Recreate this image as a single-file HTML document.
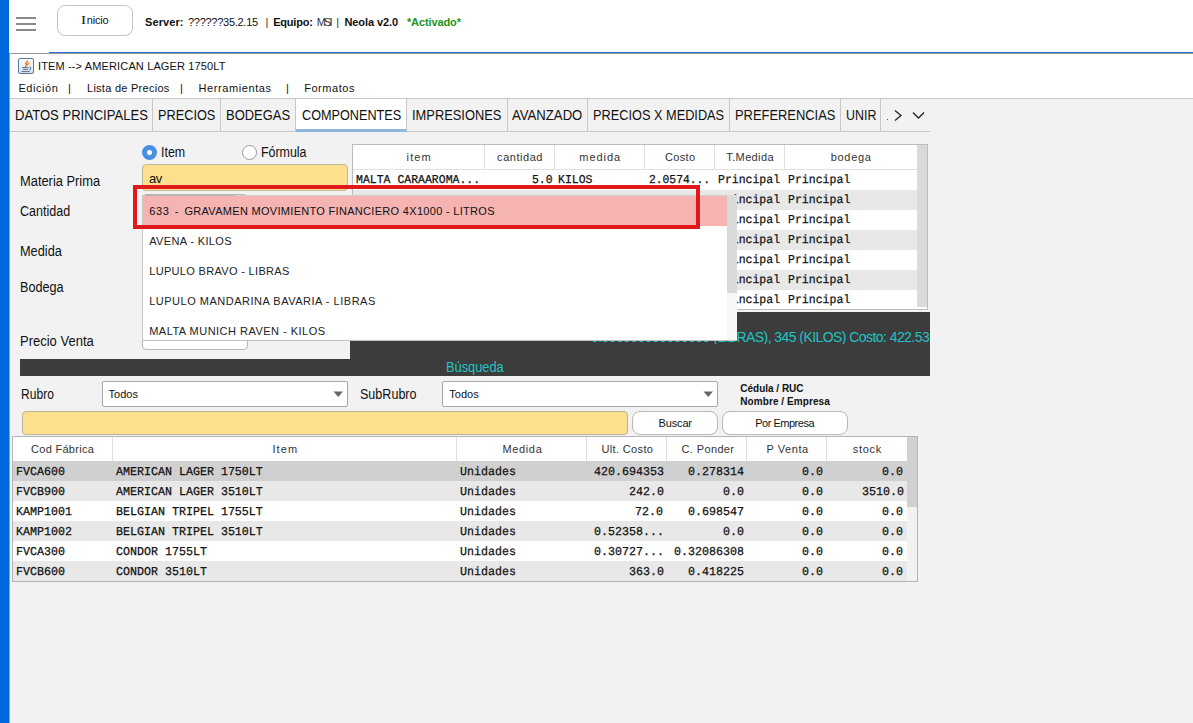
<!DOCTYPE html>
<html><head><meta charset="utf-8">
<style>
*{margin:0;padding:0;box-sizing:border-box}
html,body{width:1193px;height:723px;overflow:hidden;background:#f2f2f2;font-family:"Liberation Sans",sans-serif;position:relative}
.a{position:absolute;white-space:nowrap}
</style></head><body>
<div class="a" style="left:0px;top:0px;width:9px;height:723px;background:#0067da"></div>
<div class="a" style="left:9px;top:0px;width:1184px;height:53px;background:#fff"></div>
<div class="a" style="left:49px;top:52px;width:1144px;height:1px;background:#2a6fd0"></div>
<div class="a" style="left:9px;top:53px;width:1184px;height:1px;background:#9a9a9a"></div>
<div class="a" style="left:9px;top:53px;width:1px;height:670px;background:#9c9c9c"></div>
<div class="a" style="left:16px;top:17px;width:20px;height:2px;background:#8a8a8a"></div>
<div class="a" style="left:16px;top:23px;width:20px;height:2px;background:#8a8a8a"></div>
<div class="a" style="left:16px;top:29px;width:20px;height:2px;background:#8a8a8a"></div>
<div class="a" style="left:57px;top:5px;width:76px;height:31px;border:1px solid #c4c4c4;border-radius:8px;background:#fff"></div>
<div class="a" style="left:80.90px;top:14.00px;font:400 12px/12px 'Liberation Serif';color:#111;transform:scaleX(1.25);transform-origin:0 0">I</div>
<div class="a" style="left:86.70px;top:15.00px;font:400 11px/11px 'Liberation Sans';color:#111;letter-spacing:-0.175px;">nicio</div>
<div class="a" style="left:145.10px;top:17.00px;font:700 11px/11px 'Liberation Sans';color:#111;letter-spacing:0.083px;">Server:</div>
<div class="a" style="left:188.00px;top:17.00px;font:400 11px/11px 'Liberation Sans';color:#111;letter-spacing:-0.275px;">??????35.2.15</div>
<div class="a" style="left:265.40px;top:17.00px;font:400 11px/11px 'Liberation Sans';color:#333;">|</div>
<div class="a" style="left:273.20px;top:17.00px;font:700 11px/11px 'Liberation Sans';color:#111;letter-spacing:-0.200px;">Equipo:</div>
<div class="a" style="left:316.80px;top:17.00px;font:400 11px/11px 'Liberation Sans';color:#333;letter-spacing:-1.900px;">MSI</div>
<div class="a" style="left:336.30px;top:17.00px;font:400 11px/11px 'Liberation Sans';color:#333;">|</div>
<div class="a" style="left:344.50px;top:17.00px;font:700 11px/11px 'Liberation Sans';color:#111;letter-spacing:-0.100px;">Neola v2.0</div>
<div class="a" style="left:406.90px;top:17.00px;font:700 11px/11px 'Liberation Sans';color:#1a961a;letter-spacing:-0.100px;">*Activado*</div>
<div class="a" style="left:10px;top:54px;width:1183px;height:44px;background:#fff"></div>
<svg class="a" style="left:18px;top:58px" width="16" height="16"><defs><linearGradient id="jg" x1="0" y1="0" x2="0" y2="1"><stop offset="0" stop-color="#fafbfc"/><stop offset="1" stop-color="#dfe5ec"/></linearGradient></defs><rect x="0.5" y="0.5" width="15" height="15" rx="1.5" fill="url(#jg)" stroke="#56789a"/><path d="M9.8 2.6 L7.6 5.6 L8.6 6.4 L7.2 9.2 M11 4.6 L9.2 7.2" stroke="#ef7d1e" stroke-width="1.3" fill="none"/><path d="M4 9.6 H10.6 M5 11.4 H10 M3.4 13.6 H11.8" stroke="#4f7394" stroke-width="1" fill="none"/><path d="M11.6 8.6 Q13.8 10.2 11.4 12.2" stroke="#4f7394" stroke-width="1.1" fill="none"/></svg>
<div class="a" style="left:38.00px;top:61.00px;font:400 11px/11px 'Liberation Sans';color:#111;letter-spacing:0.138px;">ITEM --&gt; AMERICAN LAGER 1750LT</div>
<div class="a" style="left:18.40px;top:83.00px;font:400 11px/11px 'Liberation Sans';color:#111;letter-spacing:0.550px;">Edición</div>
<div class="a" style="left:68.00px;top:83.00px;font:400 11px/11px 'Liberation Sans';color:#111;">|</div>
<div class="a" style="left:87.00px;top:83.00px;font:400 11px/11px 'Liberation Sans';color:#111;letter-spacing:0.267px;">Lista de Precios</div>
<div class="a" style="left:180.00px;top:83.00px;font:400 11px/11px 'Liberation Sans';color:#111;">|</div>
<div class="a" style="left:198.60px;top:83.00px;font:400 11px/11px 'Liberation Sans';color:#111;letter-spacing:0.582px;">Herramientas</div>
<div class="a" style="left:286.00px;top:83.00px;font:400 11px/11px 'Liberation Sans';color:#111;">|</div>
<div class="a" style="left:304.20px;top:83.00px;font:400 11px/11px 'Liberation Sans';color:#111;letter-spacing:0.543px;">Formatos</div>
<div class="a" style="left:10px;top:98px;width:1183px;height:1px;background:#c8c8c8"></div>
<div class="a" style="left:10px;top:131px;width:920px;height:1px;background:#c8c8c8"></div>
<div class="a" style="left:296px;top:99px;width:110px;height:32px;background:#fff"></div>
<div class="a" style="left:296px;top:129px;width:111px;height:3px;background:#8fb6de"></div>
<div class="a" style="left:152px;top:99px;width:1px;height:32px;background:#c8c8c8"></div>
<div class="a" style="left:220px;top:99px;width:1px;height:32px;background:#c8c8c8"></div>
<div class="a" style="left:295px;top:99px;width:1px;height:32px;background:#c8c8c8"></div>
<div class="a" style="left:406px;top:99px;width:1px;height:32px;background:#c8c8c8"></div>
<div class="a" style="left:507px;top:99px;width:1px;height:32px;background:#c8c8c8"></div>
<div class="a" style="left:587px;top:99px;width:1px;height:32px;background:#c8c8c8"></div>
<div class="a" style="left:729px;top:99px;width:1px;height:32px;background:#c8c8c8"></div>
<div class="a" style="left:840px;top:99px;width:1px;height:32px;background:#c8c8c8"></div>
<div class="a" style="left:880px;top:99px;width:1px;height:32px;background:#c8c8c8"></div>
<div class="a" style="left:15.00px;top:108.00px;font:400 14px/14px 'Liberation Sans';color:#111;transform:scaleX(0.9331);transform-origin:0 0;">DATOS PRINCIPALES</div>
<div class="a" style="left:158.30px;top:108.00px;font:400 14px/14px 'Liberation Sans';color:#111;transform:scaleX(0.9095);transform-origin:0 0;">PRECIOS</div>
<div class="a" style="left:226.40px;top:108.00px;font:400 14px/14px 'Liberation Sans';color:#111;transform:scaleX(0.9246);transform-origin:0 0;">BODEGAS</div>
<div class="a" style="left:301.50px;top:108.00px;font:400 14px/14px 'Liberation Sans';color:#111;transform:scaleX(0.9045);transform-origin:0 0;">COMPONENTES</div>
<div class="a" style="left:412.20px;top:108.00px;font:400 14px/14px 'Liberation Sans';color:#111;transform:scaleX(0.9196);transform-origin:0 0;">IMPRESIONES</div>
<div class="a" style="left:512.20px;top:108.00px;font:400 14px/14px 'Liberation Sans';color:#111;transform:scaleX(0.9387);transform-origin:0 0;">AVANZADO</div>
<div class="a" style="left:593.00px;top:108.00px;font:400 14px/14px 'Liberation Sans';color:#111;transform:scaleX(0.9111);transform-origin:0 0;">PRECIOS X MEDIDAS</div>
<div class="a" style="left:734.80px;top:108.00px;font:400 14px/14px 'Liberation Sans';color:#111;transform:scaleX(0.9220);transform-origin:0 0;">PREFERENCIAS</div>
<div class="a" style="left:845.50px;top:108.00px;font:400 14px/14px 'Liberation Sans';color:#111;transform:scaleX(0.8882);transform-origin:0 0;">UNIR</div>
<div class="a" style="left:887px;top:119px;width:1px;height:1px;background:#555"></div>
<svg class="a" style="left:893px;top:109px" width="34" height="14"><path d="M2 1.5 L8 6.5 L2 11.5" stroke="#222" stroke-width="1.3" fill="none"/><path d="M20 3.5 L25.5 9 L31 3.5" stroke="#222" stroke-width="1.3" fill="none"/></svg>
<div class="a" style="left:20.30px;top:174.00px;font:400 14px/14px 'Liberation Sans';color:#111;transform:scaleX(0.9195);transform-origin:0 0;">Materia Prima</div>
<div class="a" style="left:20.30px;top:204.00px;font:400 14px/14px 'Liberation Sans';color:#111;transform:scaleX(0.8964);transform-origin:0 0;">Cantidad</div>
<div class="a" style="left:20.30px;top:244.00px;font:400 14px/14px 'Liberation Sans';color:#111;transform:scaleX(0.9109);transform-origin:0 0;">Medida</div>
<div class="a" style="left:20.30px;top:280.00px;font:400 14px/14px 'Liberation Sans';color:#111;transform:scaleX(0.9042);transform-origin:0 0;">Bodega</div>
<div class="a" style="left:20.30px;top:334.00px;font:400 14px/14px 'Liberation Sans';color:#111;transform:scaleX(0.9287);transform-origin:0 0;">Precio Venta</div>
<div class="a" style="left:142px;top:145px;width:15px;height:15px;border-radius:50%;background:#4a90e2"></div>
<div class="a" style="left:147px;top:150px;width:5px;height:5px;border-radius:50%;background:#fff"></div>
<div class="a" style="left:161.40px;top:145.00px;font:400 14px/14px 'Liberation Sans';color:#111;transform:scaleX(0.8889);transform-origin:0 0;">Item</div>
<div class="a" style="left:242px;top:145px;width:15px;height:15px;border-radius:50%;background:#fff;border:1px solid #9a9a9a"></div>
<div class="a" style="left:261.40px;top:145.00px;font:400 14px/14px 'Liberation Sans';color:#111;transform:scaleX(0.8865);transform-origin:0 0;">Fórmula</div>
<div class="a" style="left:142px;top:164px;width:206px;height:27px;background:#fde08e;border:1px solid #c2b79a;border-radius:4px"></div>
<div class="a" style="left:149.00px;top:172.00px;font:400 13px/13px 'Liberation Sans';color:#111;letter-spacing:-0.600px;">av</div>
<div class="a" style="left:142px;top:194px;width:106px;height:156px;background:#fff;border:1px solid #b8b8b8;border-radius:4px"></div>
<div class="a" style="left:350px;top:312px;width:580px;height:64px;background:#3c3c3c"></div>
<div class="a" style="left:20px;top:359px;width:910px;height:17px;background:#3c3c3c"></div>
<div class="a" style="left:590.92px;top:330px;width:339.08px;overflow:hidden;font:400 14px/14px 'Liberation Sans';color:#22c3c3;letter-spacing:-0.565px">0.000000000000000 (LIBRAS), 345 (KILOS) Costo: 422.53</div>
<div class="a" style="left:446.00px;top:360.00px;font:400 14px/14px 'Liberation Sans';color:#22c3c3;transform:scaleX(0.9143);transform-origin:0 0;">Búsqueda</div>
<div class="a" style="left:352px;top:144px;width:576px;height:166px;background:#fff;border:1px solid #bcbcbc"></div>
<div class="a" style="left:353px;top:145px;width:564px;height:24px;background:#fff"></div>
<div class="a" style="left:353px;top:169px;width:564px;height:1px;background:#e0e0e0"></div>
<div class="a" style="left:484px;top:145px;width:1px;height:24px;background:#e0e0e0"></div>
<div class="a" style="left:554px;top:145px;width:1px;height:24px;background:#e0e0e0"></div>
<div class="a" style="left:644px;top:145px;width:1px;height:24px;background:#e0e0e0"></div>
<div class="a" style="left:714px;top:145px;width:1px;height:24px;background:#e0e0e0"></div>
<div class="a" style="left:784px;top:145px;width:1px;height:24px;background:#e0e0e0"></div>
<div class="a" style="left:353px;top:170px;width:564px;height:20px;background:#fff"></div>
<div class="a" style="left:353px;top:190px;width:564px;height:20px;background:#e8e8e8"></div>
<div class="a" style="left:353px;top:210px;width:564px;height:20px;background:#fff"></div>
<div class="a" style="left:353px;top:230px;width:564px;height:20px;background:#e8e8e8"></div>
<div class="a" style="left:353px;top:250px;width:564px;height:20px;background:#fff"></div>
<div class="a" style="left:353px;top:270px;width:564px;height:20px;background:#e8e8e8"></div>
<div class="a" style="left:353px;top:290px;width:564px;height:19px;background:#fff"></div>
<div class="a" style="left:917px;top:145px;width:10px;height:162px;background:#dadada"></div>
<div class="a" style="left:406.60px;top:152.00px;font:400 11px/11px 'Liberation Sans';color:#333;letter-spacing:1.133px;">item</div>
<div class="a" style="left:497.10px;top:152.00px;font:400 11px/11px 'Liberation Sans';color:#333;letter-spacing:0.543px;">cantidad</div>
<div class="a" style="left:579.30px;top:152.00px;font:400 11px/11px 'Liberation Sans';color:#333;letter-spacing:0.940px;">medida</div>
<div class="a" style="left:665.00px;top:152.00px;font:400 11px/11px 'Liberation Sans';color:#333;letter-spacing:0.350px;">Costo</div>
<div class="a" style="left:726.30px;top:152.00px;font:400 11px/11px 'Liberation Sans';color:#333;letter-spacing:0.371px;">T.Medida</div>
<div class="a" style="left:830.80px;top:152.00px;font:400 11px/11px 'Liberation Sans';color:#333;letter-spacing:0.660px;">bodega</div>
<div class="a" style="left:356.30px;top:174.00px;font:400 12px/12px 'Liberation Mono';color:#111;transform:scale(0.9577,1);transform-origin:0 0;text-rendering:geometricPrecision;-webkit-text-stroke:0.25px #111;">MALTA CARAAROMA...</div>
<div class="a" style="left:531.50px;top:174.00px;font:400 12px/12px 'Liberation Mono';color:#111;transform:scale(0.9500,1);transform-origin:0 0;text-rendering:geometricPrecision;-webkit-text-stroke:0.25px #111;">5.0</div>
<div class="a" style="left:558.20px;top:174.00px;font:400 12px/12px 'Liberation Mono';color:#111;transform:scale(0.9556,1);transform-origin:0 0;text-rendering:geometricPrecision;-webkit-text-stroke:0.25px #111;">KILOS</div>
<div class="a" style="left:649.20px;top:174.00px;font:400 12px/12px 'Liberation Mono';color:#111;transform:scale(0.9431,1);transform-origin:0 0;text-rendering:geometricPrecision;-webkit-text-stroke:0.25px #111;">2.0574...</div>
<div class="a" style="left:718.30px;top:174.00px;font:400 12px/12px 'Liberation Mono';color:#111;transform:scale(0.9569,1);transform-origin:0 0;text-rendering:geometricPrecision;-webkit-text-stroke:0.25px #111;">Principal</div>
<div class="a" style="left:787.80px;top:174.00px;font:400 12px/12px 'Liberation Mono';color:#111;transform:scale(0.9615,1);transform-origin:0 0;text-rendering:geometricPrecision;-webkit-text-stroke:0.25px #111;">Principal</div>
<div class="a" style="left:718.30px;top:194.00px;font:400 12px/12px 'Liberation Mono';color:#111;transform:scale(0.9569,1);transform-origin:0 0;text-rendering:geometricPrecision;-webkit-text-stroke:0.25px #111;">Principal</div>
<div class="a" style="left:787.80px;top:194.00px;font:400 12px/12px 'Liberation Mono';color:#111;transform:scale(0.9615,1);transform-origin:0 0;text-rendering:geometricPrecision;-webkit-text-stroke:0.25px #111;">Principal</div>
<div class="a" style="left:718.30px;top:214.00px;font:400 12px/12px 'Liberation Mono';color:#111;transform:scale(0.9569,1);transform-origin:0 0;text-rendering:geometricPrecision;-webkit-text-stroke:0.25px #111;">Principal</div>
<div class="a" style="left:787.80px;top:214.00px;font:400 12px/12px 'Liberation Mono';color:#111;transform:scale(0.9615,1);transform-origin:0 0;text-rendering:geometricPrecision;-webkit-text-stroke:0.25px #111;">Principal</div>
<div class="a" style="left:718.30px;top:234.00px;font:400 12px/12px 'Liberation Mono';color:#111;transform:scale(0.9569,1);transform-origin:0 0;text-rendering:geometricPrecision;-webkit-text-stroke:0.25px #111;">Principal</div>
<div class="a" style="left:787.80px;top:234.00px;font:400 12px/12px 'Liberation Mono';color:#111;transform:scale(0.9615,1);transform-origin:0 0;text-rendering:geometricPrecision;-webkit-text-stroke:0.25px #111;">Principal</div>
<div class="a" style="left:718.30px;top:254.00px;font:400 12px/12px 'Liberation Mono';color:#111;transform:scale(0.9569,1);transform-origin:0 0;text-rendering:geometricPrecision;-webkit-text-stroke:0.25px #111;">Principal</div>
<div class="a" style="left:787.80px;top:254.00px;font:400 12px/12px 'Liberation Mono';color:#111;transform:scale(0.9615,1);transform-origin:0 0;text-rendering:geometricPrecision;-webkit-text-stroke:0.25px #111;">Principal</div>
<div class="a" style="left:718.30px;top:274.00px;font:400 12px/12px 'Liberation Mono';color:#111;transform:scale(0.9569,1);transform-origin:0 0;text-rendering:geometricPrecision;-webkit-text-stroke:0.25px #111;">Principal</div>
<div class="a" style="left:787.80px;top:274.00px;font:400 12px/12px 'Liberation Mono';color:#111;transform:scale(0.9615,1);transform-origin:0 0;text-rendering:geometricPrecision;-webkit-text-stroke:0.25px #111;">Principal</div>
<div class="a" style="left:718.30px;top:294.00px;font:400 12px/12px 'Liberation Mono';color:#111;transform:scale(0.9569,1);transform-origin:0 0;text-rendering:geometricPrecision;-webkit-text-stroke:0.25px #111;">Principal</div>
<div class="a" style="left:787.80px;top:294.00px;font:400 12px/12px 'Liberation Mono';color:#111;transform:scale(0.9615,1);transform-origin:0 0;text-rendering:geometricPrecision;-webkit-text-stroke:0.25px #111;">Principal</div>
<div class="a" style="left:142px;top:195px;width:595px;height:146px;background:#fff;border-left:1px solid #c8c8c8;border-top:1px solid #cfcfcf;border-bottom:1px solid #c0c0c0"></div>
<div class="a" style="left:143px;top:196px;width:584px;height:30px;background:#f5b4b1"></div>
<div class="a" style="left:145px;top:195px;width:90px;height:1px;background:#b4b4b4"></div>
<div class="a" style="left:727px;top:195px;width:10px;height:145px;background:#f7f7f7"></div>
<div class="a" style="left:727px;top:195px;width:10px;height:98px;background:#d9d9d9"></div>
<div class="a" style="left:149.30px;top:206.00px;font:400 11px/11px 'Liberation Sans';color:#111;letter-spacing:0.600px;">633</div>
<div class="a" style="left:174.70px;top:206.00px;font:400 11px/11px 'Liberation Sans';color:#111;">-</div>
<div class="a" style="left:184.40px;top:206.00px;font:400 11px/11px 'Liberation Sans';color:#111;letter-spacing:0.304px;">GRAVAMEN MOVIMIENTO FINANCIERO 4X1000 - LITROS</div>
<div class="a" style="left:149.20px;top:236.00px;font:400 11px/11px 'Liberation Sans';color:#222;letter-spacing:0.358px;">AVENA - KILOS</div>
<div class="a" style="left:149.20px;top:266.00px;font:400 11px/11px 'Liberation Sans';color:#222;letter-spacing:0.325px;">LUPULO BRAVO - LIBRAS</div>
<div class="a" style="left:149.20px;top:296.00px;font:400 11px/11px 'Liberation Sans';color:#222;letter-spacing:0.506px;">LUPULO MANDARINA BAVARIA - LIBRAS</div>
<div class="a" style="left:149.20px;top:326.00px;font:400 11px/11px 'Liberation Sans';color:#222;letter-spacing:0.484px;">MALTA MUNICH RAVEN - KILOS</div>
<div class="a" style="left:133px;top:185px;width:567px;height:44px;border:4px solid #e0191b"></div>
<div class="a" style="left:20.50px;top:387.00px;font:400 14px/14px 'Liberation Sans';color:#111;transform:scaleX(0.8632);transform-origin:0 0;">Rubro</div>
<div class="a" style="left:102px;top:381px;width:246px;height:26px;background:#fff;border:1px solid #a8a8a8;border-radius:2px"></div>
<div class="a" style="left:108.60px;top:389.00px;font:400 11px/11px 'Liberation Sans';color:#111;letter-spacing:0.000px;">Todos</div>
<svg class="a" style="left:333px;top:391px" width="11" height="7"><path d="M0.5 0.5 L10 0.5 L5.25 6 Z" fill="#666"/></svg>
<div class="a" style="left:360.20px;top:387.00px;font:400 14px/14px 'Liberation Sans';color:#111;transform:scaleX(0.8968);transform-origin:0 0;">SubRubro</div>
<div class="a" style="left:442px;top:381px;width:276px;height:26px;background:#fff;border:1px solid #a8a8a8;border-radius:2px"></div>
<div class="a" style="left:449.30px;top:389.00px;font:400 11px/11px 'Liberation Sans';color:#111;letter-spacing:0.000px;">Todos</div>
<svg class="a" style="left:703px;top:391px" width="11" height="7"><path d="M0.5 0.5 L10 0.5 L5.25 6 Z" fill="#666"/></svg>
<div class="a" style="left:740.30px;top:384.00px;font:700 10px/10px 'Liberation Sans';color:#111;letter-spacing:-0.009px;">Cédula / RUC</div>
<div class="a" style="left:740.30px;top:397.00px;font:700 10px/10px 'Liberation Sans';color:#111;letter-spacing:0.073px;">Nombre / Empresa</div>
<div class="a" style="left:22px;top:411px;width:606px;height:24px;background:#fde08e;border:1px solid #bdb39a;border-radius:4px"></div>
<div class="a" style="left:632px;top:411px;width:86px;height:24px;background:#fff;border:1px solid #b8b8b8;border-radius:8px"></div>
<div class="a" style="left:658.60px;top:418.00px;font:400 11px/11px 'Liberation Sans';color:#111;letter-spacing:-0.160px;">Buscar</div>
<div class="a" style="left:722px;top:411px;width:126px;height:24px;background:#fff;border:1px solid #b8b8b8;border-radius:8px"></div>
<div class="a" style="left:755.20px;top:418.00px;font:400 11px/11px 'Liberation Sans';color:#111;letter-spacing:-0.480px;">Por Empresa</div>
<div class="a" style="left:12px;top:436px;width:906px;height:146px;background:#fff;border:1px solid #b4b4b4"></div>
<div class="a" style="left:13px;top:437px;width:894px;height:24px;background:#fff"></div>
<div class="a" style="left:112px;top:437px;width:1px;height:24px;background:#e0e0e0"></div>
<div class="a" style="left:456px;top:437px;width:1px;height:24px;background:#e0e0e0"></div>
<div class="a" style="left:586px;top:437px;width:1px;height:24px;background:#e0e0e0"></div>
<div class="a" style="left:666px;top:437px;width:1px;height:24px;background:#e0e0e0"></div>
<div class="a" style="left:746px;top:437px;width:1px;height:24px;background:#e0e0e0"></div>
<div class="a" style="left:826px;top:437px;width:1px;height:24px;background:#e0e0e0"></div>
<div class="a" style="left:13px;top:461px;width:894px;height:20px;background:#d0d0d0"></div>
<div class="a" style="left:13px;top:481px;width:894px;height:20px;background:#e8e8e8"></div>
<div class="a" style="left:13px;top:501px;width:894px;height:20px;background:#fff"></div>
<div class="a" style="left:13px;top:521px;width:894px;height:20px;background:#e8e8e8"></div>
<div class="a" style="left:13px;top:541px;width:894px;height:20px;background:#fff"></div>
<div class="a" style="left:13px;top:561px;width:894px;height:20px;background:#e8e8e8"></div>
<div class="a" style="left:907px;top:437px;width:10px;height:144px;background:#f2f2f2"></div>
<div class="a" style="left:907px;top:437px;width:10px;height:70px;background:#d0d0d0"></div>
<div class="a" style="left:31.00px;top:444.00px;font:400 11px/11px 'Liberation Sans';color:#333;letter-spacing:0.300px;">Cod Fábrica</div>
<div class="a" style="left:272.40px;top:444.00px;font:400 11px/11px 'Liberation Sans';color:#333;letter-spacing:1.100px;">Item</div>
<div class="a" style="left:502.40px;top:444.00px;font:400 11px/11px 'Liberation Sans';color:#333;letter-spacing:0.660px;">Medida</div>
<div class="a" style="left:601.40px;top:444.00px;font:400 11px/11px 'Liberation Sans';color:#333;letter-spacing:0.367px;">Ult. Costo</div>
<div class="a" style="left:681.50px;top:444.00px;font:400 11px/11px 'Liberation Sans';color:#333;letter-spacing:0.375px;">C. Ponder</div>
<div class="a" style="left:766.50px;top:444.00px;font:400 11px/11px 'Liberation Sans';color:#333;letter-spacing:0.550px;">P Venta</div>
<div class="a" style="left:852.70px;top:444.00px;font:400 11px/11px 'Liberation Sans';color:#333;letter-spacing:0.700px;">stock</div>
<div class="a" style="left:16.40px;top:466.00px;font:400 12px/12px 'Liberation Mono';color:#111;transform:scale(0.9710,1);transform-origin:0 0;text-rendering:geometricPrecision;-webkit-text-stroke:0.25px #111;">FVCA600</div>
<div class="a" style="left:115.90px;top:466.00px;font:400 12px/12px 'Liberation Mono';color:#111;transform:scale(0.9710,1);transform-origin:0 0;text-rendering:geometricPrecision;-webkit-text-stroke:0.25px #111;">AMERICAN LAGER 1750LT</div>
<div class="a" style="left:460.00px;top:466.00px;font:400 12px/12px 'Liberation Mono';color:#111;transform:scale(0.9710,1);transform-origin:0 0;text-rendering:geometricPrecision;-webkit-text-stroke:0.25px #111;">Unidades</div>
<div class="a" style="left:593.69px;top:466.00px;font:400 12px/12px 'Liberation Mono';color:#111;transform:scale(0.9710,1);transform-origin:0 0;text-rendering:geometricPrecision;-webkit-text-stroke:0.25px #111;">420.694353</div>
<div class="a" style="left:687.58px;top:466.00px;font:400 12px/12px 'Liberation Mono';color:#111;transform:scale(0.9710,1);transform-origin:0 0;text-rendering:geometricPrecision;-webkit-text-stroke:0.25px #111;">0.278314</div>
<div class="a" style="left:802.14px;top:466.00px;font:400 12px/12px 'Liberation Mono';color:#111;transform:scale(0.9710,1);transform-origin:0 0;text-rendering:geometricPrecision;-webkit-text-stroke:0.25px #111;">0.0</div>
<div class="a" style="left:882.34px;top:466.00px;font:400 12px/12px 'Liberation Mono';color:#111;transform:scale(0.9710,1);transform-origin:0 0;text-rendering:geometricPrecision;-webkit-text-stroke:0.25px #111;">0.0</div>
<div class="a" style="left:16.40px;top:486.00px;font:400 12px/12px 'Liberation Mono';color:#111;transform:scale(0.9710,1);transform-origin:0 0;text-rendering:geometricPrecision;-webkit-text-stroke:0.25px #111;">FVCB900</div>
<div class="a" style="left:115.90px;top:486.00px;font:400 12px/12px 'Liberation Mono';color:#111;transform:scale(0.9710,1);transform-origin:0 0;text-rendering:geometricPrecision;-webkit-text-stroke:0.25px #111;">AMERICAN LAGER 3510LT</div>
<div class="a" style="left:460.00px;top:486.00px;font:400 12px/12px 'Liberation Mono';color:#111;transform:scale(0.9710,1);transform-origin:0 0;text-rendering:geometricPrecision;-webkit-text-stroke:0.25px #111;">Unidades</div>
<div class="a" style="left:628.64px;top:486.00px;font:400 12px/12px 'Liberation Mono';color:#111;transform:scale(0.9710,1);transform-origin:0 0;text-rendering:geometricPrecision;-webkit-text-stroke:0.25px #111;">242.0</div>
<div class="a" style="left:722.54px;top:486.00px;font:400 12px/12px 'Liberation Mono';color:#111;transform:scale(0.9710,1);transform-origin:0 0;text-rendering:geometricPrecision;-webkit-text-stroke:0.25px #111;">0.0</div>
<div class="a" style="left:802.14px;top:486.00px;font:400 12px/12px 'Liberation Mono';color:#111;transform:scale(0.9710,1);transform-origin:0 0;text-rendering:geometricPrecision;-webkit-text-stroke:0.25px #111;">0.0</div>
<div class="a" style="left:861.95px;top:486.00px;font:400 12px/12px 'Liberation Mono';color:#111;transform:scale(0.9710,1);transform-origin:0 0;text-rendering:geometricPrecision;-webkit-text-stroke:0.25px #111;">3510.0</div>
<div class="a" style="left:16.40px;top:506.00px;font:400 12px/12px 'Liberation Mono';color:#111;transform:scale(0.9710,1);transform-origin:0 0;text-rendering:geometricPrecision;-webkit-text-stroke:0.25px #111;">KAMP1001</div>
<div class="a" style="left:115.90px;top:506.00px;font:400 12px/12px 'Liberation Mono';color:#111;transform:scale(0.9710,1);transform-origin:0 0;text-rendering:geometricPrecision;-webkit-text-stroke:0.25px #111;">BELGIAN TRIPEL 1755LT</div>
<div class="a" style="left:460.00px;top:506.00px;font:400 12px/12px 'Liberation Mono';color:#111;transform:scale(0.9710,1);transform-origin:0 0;text-rendering:geometricPrecision;-webkit-text-stroke:0.25px #111;">Unidades</div>
<div class="a" style="left:635.44px;top:506.00px;font:400 12px/12px 'Liberation Mono';color:#111;transform:scale(0.9710,1);transform-origin:0 0;text-rendering:geometricPrecision;-webkit-text-stroke:0.25px #111;">72.0</div>
<div class="a" style="left:687.58px;top:506.00px;font:400 12px/12px 'Liberation Mono';color:#111;transform:scale(0.9710,1);transform-origin:0 0;text-rendering:geometricPrecision;-webkit-text-stroke:0.25px #111;">0.698547</div>
<div class="a" style="left:802.14px;top:506.00px;font:400 12px/12px 'Liberation Mono';color:#111;transform:scale(0.9710,1);transform-origin:0 0;text-rendering:geometricPrecision;-webkit-text-stroke:0.25px #111;">0.0</div>
<div class="a" style="left:882.34px;top:506.00px;font:400 12px/12px 'Liberation Mono';color:#111;transform:scale(0.9710,1);transform-origin:0 0;text-rendering:geometricPrecision;-webkit-text-stroke:0.25px #111;">0.0</div>
<div class="a" style="left:16.40px;top:526.00px;font:400 12px/12px 'Liberation Mono';color:#111;transform:scale(0.9710,1);transform-origin:0 0;text-rendering:geometricPrecision;-webkit-text-stroke:0.25px #111;">KAMP1002</div>
<div class="a" style="left:115.90px;top:526.00px;font:400 12px/12px 'Liberation Mono';color:#111;transform:scale(0.9710,1);transform-origin:0 0;text-rendering:geometricPrecision;-webkit-text-stroke:0.25px #111;">BELGIAN TRIPEL 3510LT</div>
<div class="a" style="left:460.00px;top:526.00px;font:400 12px/12px 'Liberation Mono';color:#111;transform:scale(0.9710,1);transform-origin:0 0;text-rendering:geometricPrecision;-webkit-text-stroke:0.25px #111;">Unidades</div>
<div class="a" style="left:593.69px;top:526.00px;font:400 12px/12px 'Liberation Mono';color:#111;transform:scale(0.9710,1);transform-origin:0 0;text-rendering:geometricPrecision;-webkit-text-stroke:0.25px #111;">0.52358...</div>
<div class="a" style="left:722.54px;top:526.00px;font:400 12px/12px 'Liberation Mono';color:#111;transform:scale(0.9710,1);transform-origin:0 0;text-rendering:geometricPrecision;-webkit-text-stroke:0.25px #111;">0.0</div>
<div class="a" style="left:802.14px;top:526.00px;font:400 12px/12px 'Liberation Mono';color:#111;transform:scale(0.9710,1);transform-origin:0 0;text-rendering:geometricPrecision;-webkit-text-stroke:0.25px #111;">0.0</div>
<div class="a" style="left:882.34px;top:526.00px;font:400 12px/12px 'Liberation Mono';color:#111;transform:scale(0.9710,1);transform-origin:0 0;text-rendering:geometricPrecision;-webkit-text-stroke:0.25px #111;">0.0</div>
<div class="a" style="left:16.40px;top:546.00px;font:400 12px/12px 'Liberation Mono';color:#111;transform:scale(0.9710,1);transform-origin:0 0;text-rendering:geometricPrecision;-webkit-text-stroke:0.25px #111;">FVCA300</div>
<div class="a" style="left:115.90px;top:546.00px;font:400 12px/12px 'Liberation Mono';color:#111;transform:scale(0.9710,1);transform-origin:0 0;text-rendering:geometricPrecision;-webkit-text-stroke:0.25px #111;">CONDOR 1755LT</div>
<div class="a" style="left:460.00px;top:546.00px;font:400 12px/12px 'Liberation Mono';color:#111;transform:scale(0.9710,1);transform-origin:0 0;text-rendering:geometricPrecision;-webkit-text-stroke:0.25px #111;">Unidades</div>
<div class="a" style="left:593.69px;top:546.00px;font:400 12px/12px 'Liberation Mono';color:#111;transform:scale(0.9710,1);transform-origin:0 0;text-rendering:geometricPrecision;-webkit-text-stroke:0.25px #111;">0.30727...</div>
<div class="a" style="left:673.99px;top:546.00px;font:400 12px/12px 'Liberation Mono';color:#111;transform:scale(0.9710,1);transform-origin:0 0;text-rendering:geometricPrecision;-webkit-text-stroke:0.25px #111;">0.32086308</div>
<div class="a" style="left:802.14px;top:546.00px;font:400 12px/12px 'Liberation Mono';color:#111;transform:scale(0.9710,1);transform-origin:0 0;text-rendering:geometricPrecision;-webkit-text-stroke:0.25px #111;">0.0</div>
<div class="a" style="left:882.34px;top:546.00px;font:400 12px/12px 'Liberation Mono';color:#111;transform:scale(0.9710,1);transform-origin:0 0;text-rendering:geometricPrecision;-webkit-text-stroke:0.25px #111;">0.0</div>
<div class="a" style="left:16.40px;top:566.00px;font:400 12px/12px 'Liberation Mono';color:#111;transform:scale(0.9710,1);transform-origin:0 0;text-rendering:geometricPrecision;-webkit-text-stroke:0.25px #111;">FVCB600</div>
<div class="a" style="left:115.90px;top:566.00px;font:400 12px/12px 'Liberation Mono';color:#111;transform:scale(0.9710,1);transform-origin:0 0;text-rendering:geometricPrecision;-webkit-text-stroke:0.25px #111;">CONDOR 3510LT</div>
<div class="a" style="left:460.00px;top:566.00px;font:400 12px/12px 'Liberation Mono';color:#111;transform:scale(0.9710,1);transform-origin:0 0;text-rendering:geometricPrecision;-webkit-text-stroke:0.25px #111;">Unidades</div>
<div class="a" style="left:628.64px;top:566.00px;font:400 12px/12px 'Liberation Mono';color:#111;transform:scale(0.9710,1);transform-origin:0 0;text-rendering:geometricPrecision;-webkit-text-stroke:0.25px #111;">363.0</div>
<div class="a" style="left:687.58px;top:566.00px;font:400 12px/12px 'Liberation Mono';color:#111;transform:scale(0.9710,1);transform-origin:0 0;text-rendering:geometricPrecision;-webkit-text-stroke:0.25px #111;">0.418225</div>
<div class="a" style="left:802.14px;top:566.00px;font:400 12px/12px 'Liberation Mono';color:#111;transform:scale(0.9710,1);transform-origin:0 0;text-rendering:geometricPrecision;-webkit-text-stroke:0.25px #111;">0.0</div>
<div class="a" style="left:882.34px;top:566.00px;font:400 12px/12px 'Liberation Mono';color:#111;transform:scale(0.9710,1);transform-origin:0 0;text-rendering:geometricPrecision;-webkit-text-stroke:0.25px #111;">0.0</div>
</body></html>
